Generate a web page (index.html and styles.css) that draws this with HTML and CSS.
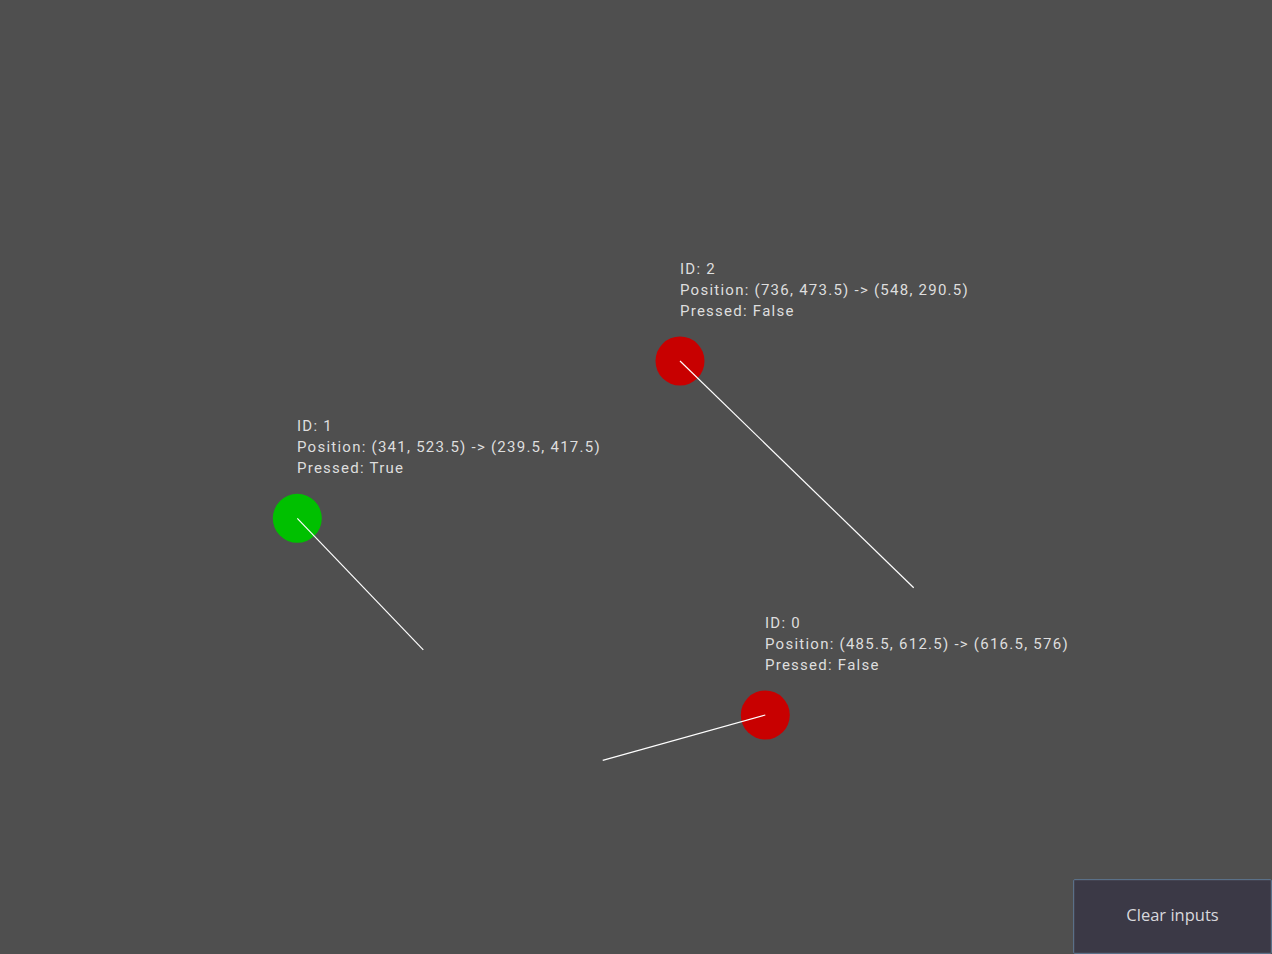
FILE: index.html
```html
<!DOCTYPE html>
<html>
<head>
<meta charset="utf-8">
<link rel="stylesheet" href="styles.css">
</head>
<body>
<div class="canvas">
  <svg class="scene" width="1272" height="954" viewBox="0 0 1272 954">
    <circle cx="680" cy="361" r="24.5" fill="#c80000"/>
    <line x1="680" y1="361" x2="913.7" y2="587.8" class="trail"/>
    <circle cx="297.3" cy="518.3" r="24.5" fill="#00c000"/>
    <line x1="297.3" y1="518.3" x2="423.3" y2="649.9" class="trail"/>
    <circle cx="765.3" cy="715" r="24.5" fill="#c80000"/>
    <line x1="765.3" y1="715" x2="602.7" y2="760.4" class="trail"/>
  </svg>
  <div class="label" style="left:680px; top:259px">
    <div>ID: 2</div>
    <div>Position: (736, 473.5) -&gt; (548, 290.5)</div>
    <div>Pressed: False</div>
  </div>
  <div class="label" style="left:297px; top:416px">
    <div>ID: 1</div>
    <div>Position: (341, 523.5) -&gt; (239.5, 417.5)</div>
    <div>Pressed: True</div>
  </div>
  <div class="label" style="left:765px; top:613px">
    <div>ID: 0</div>
    <div>Position: (485.5, 612.5) -&gt; (616.5, 576)</div>
    <div>Pressed: False</div>
  </div>
  <button class="clear">Clear inputs</button>
</div>
</body>
</html>
```
FILE: styles.css
```css
html, body {
  margin: 0;
  padding: 0;
  width: 1272px;
  height: 954px;
  overflow: hidden;
  background: #4f4f4f;
}
.canvas {
  position: relative;
  width: 1272px;
  height: 954px;
  background: #4f4f4f;
  font-family: Roboto, "Noto Sans", sans-serif;
}
.scene {
  position: absolute;
  left: 0;
  top: 0;
}
.trail {
  stroke: #ffffff;
  stroke-width: 1.2;
}
.label {
  position: absolute;
  color: #dedede;
  font-size: 15px;
  line-height: 21px;
  letter-spacing: 1.25px;
  white-space: nowrap;
}
.clear {
  position: absolute;
  right: 0;
  bottom: 0;
  width: 199px;
  height: 75px;
  box-sizing: border-box;
  background: #3b3946;
  border: 1px solid #5a7088;
  border-radius: 2px;
  box-shadow: inset 0 0 0 1px #444452;
  color: #d8d8dc;
  font-family: "Open Sans", Roboto, sans-serif;
  font-size: 16.5px;
  padding: 0 0 4px 0;
}
```
